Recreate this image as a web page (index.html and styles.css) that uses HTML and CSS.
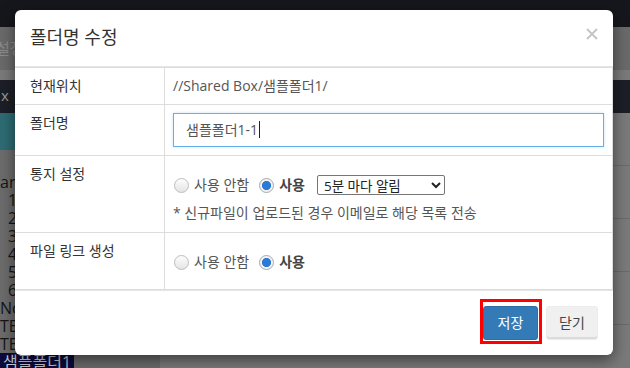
FILE: index.html
```html
<!DOCTYPE html>
<html lang="ko">
<head>
  <meta charset="UTF-8">
  <title>폴더명 수정</title>
  <link rel="stylesheet" href="styles.css">
</head>
<body>

  <div class="page">
    <div class="topbar"></div>
    <div class="toolbar"><span class="toolbar-title">설정</span></div>
    <div class="subbar"></div>
    <div class="navbar"><span class="nav-close">x</span></div>
    <div class="workspace">
      <div class="tree">
        <div class="tree-tab">수</div>
        <ul class="tree-list">
          <li>are</li>
          <li class="indent">1.</li>
          <li class="indent">2.</li>
          <li class="indent">3.</li>
          <li class="indent">4.</li>
          <li class="indent">5.</li>
          <li class="indent">6.</li>
          <li>No</li>
          <li>TE</li>
          <li>TE</li>
          <li><span class="selected">샘플폴더1</span></li>
        </ul>
      </div>
      <div class="grid">
        <div class="grid-row"></div>
        <div class="grid-row"></div>
        <div class="grid-row"></div>
        <div class="grid-row"></div>
      </div>
    </div>
  </div>

  <div class="modal">
    <div class="modal-header">
      <h4 class="modal-title">폴더명 수정</h4>
      <span class="close">
        <svg width="12" height="12" viewBox="0 0 12 12">
          <path d="M1 1 L11 11 M11 1 L1 11" stroke="#c4c4c4" stroke-width="1.8" fill="none"/>
        </svg>
      </span>
    </div>

    <div class="form">
      <div class="form-row">
        <div class="form-label">현재위치</div>
        <div class="form-value path">//Shared Box/샘플폴더1/</div>
      </div>
      <div class="form-row">
        <div class="form-label">폴더명</div>
        <div class="form-value">
          <div class="text-input">샘플폴더1-1<span class="caret"></span></div>
        </div>
      </div>
      <div class="form-row">
        <div class="form-label">통지 설정</div>
        <div class="form-value notify">
          <div class="radio-line">
            <label class="radio-label"><input type="radio" name="notify" class="radio"> 사용 안함</label>
            <label class="radio-label strong"><input type="radio" name="notify" class="radio" checked> 사용</label>
            <select class="interval">
              <option>5분 마다 알림</option>
              <option>10분 마다 알림</option>
              <option>30분 마다 알림</option>
            </select>
          </div>
          <p class="note">* 신규파일이 업로드된 경우 이메일로 해당 목록 전송</p>
        </div>
      </div>
      <div class="form-row">
        <div class="form-label">파일 링크 생성</div>
        <div class="form-value link">
          <div class="radio-line">
            <label class="radio-label"><input type="radio" name="link" class="radio"> 사용 안함</label>
            <label class="radio-label strong"><input type="radio" name="link" class="radio" checked> 사용</label>
          </div>
        </div>
      </div>
    </div>

    <div class="modal-footer">
      <span class="highlight"><button class="btn btn-primary">저장</button></span>
      <button class="btn btn-default">닫기</button>
    </div>
  </div>

</body>
</html>
```

FILE: styles.css
```css
* {
  box-sizing: border-box;
}

body {
  margin: 0;
  width: 630px;
  height: 368px;
  overflow: hidden;
  position: relative;
  font-family: 'Open Sans', 'Noto Sans CJK KR', sans-serif;
  background: #737373;
  color: #333;
}

/* background page (already dimmed by the modal backdrop) */
.topbar {
  height: 27px;
  background: #15171c;
}

.toolbar {
  height: 43px;
  background: #6a6a6a;
  color: #8c8c8c;
  font-size: 15px;
  line-height: 43px;
  text-indent: -4px;
}

.subbar {
  height: 10px;
  background: #7a7a7a;
}

.navbar {
  height: 33px;
  background: #1c1f27;
  color: #9a9a9a;
  font-size: 15px;
  line-height: 31px;
  padding-left: 1px;
}

.workspace {
  display: flex;
  height: 255px;
}

.tree {
  width: 160px;
  background: #6c6c6c;
}

.tree-tab {
  height: 37px;
  background: #2d6c74;
  color: #86aeb3;
  font-size: 14px;
  line-height: 37px;
  padding-left: 20px;
}

.tree-list {
  list-style: none;
  margin: 0;
  padding: 23px 0 0 0;
  font-size: 16px;
  line-height: 18px;
  color: #151515;
  white-space: nowrap;
}

.tree-list .indent {
  padding-left: 8px;
}

.tree-list .selected {
  display: inline-block;
  background: #0b0b3d;
  color: #c8c8d4;
  padding: 0 3px;
  line-height: 18px;
}

.grid {
  flex-grow: 1;
  background: #7a7a7a;
}

.grid-row {
  height: 53px;
  border-bottom: 1px solid #6b6b6b;
}

/* modal */
.modal {
  position: absolute;
  left: 15px;
  top: 10px;
  width: 598px;
  height: 345px;
  background: #fff;
  border-radius: 6px;
  box-shadow: 0 5px 15px rgba(0, 0, 0, 0.5);
  overflow: hidden;
}

.modal-header {
  display: flex;
  justify-content: space-between;
  padding: 14px 15px;
  border-bottom: 1px solid #e5e5e5;
  height: 57px;
}

.modal-title {
  margin: 0;
  font-size: 18px;
  font-weight: normal;
  line-height: 27px;
  color: #333;
}

.close {
  margin-top: 4px;
  height: 12px;
}

.close svg {
  display: block;
}

.form {
  border: 1px solid #ddd;
  border-left: none;
  font-size: 14px;
}

.form-row {
  display: grid;
  grid-template-columns: 150px 1fr;
  border-bottom: 1px solid #ddd;
}

.form-row:last-child {
  border-bottom: none;
}

.form-label {
  padding: 8px 15px;
  line-height: 20px;
  color: #333;
  border-right: 1px solid #ddd;
}

.form-value {
  padding: 8px;
  line-height: 20px;
  color: #555;
}

.text-input {
  height: 34px;
  border: 1px solid #66afe9;
  padding: 6px 12px;
  line-height: 20px;
  color: #555;
  box-shadow: 0 0 3px rgba(102, 175, 233, 0.35);
}

.caret {
  display: inline-block;
  width: 1px;
  height: 17px;
  background: #222;
  vertical-align: -3px;
  margin-left: 1px;
}

.notify {
  padding-bottom: 9px;
}

.link {
  padding-bottom: 16px;
}

.radio-line {
  display: flex;
  align-items: center;
  height: 22px;
  margin-top: 10px;
  color: #555;
}

.radio-label {
  display: flex;
  align-items: center;
  margin-right: 9px;
}

.radio-label.strong {
  font-weight: bold;
  color: #444;
  margin-right: 12px;
}

.radio {
  -webkit-appearance: none;
  appearance: none;
  width: 15px;
  height: 15px;
  margin: 0 5px 0 1px;
  border: 1px solid #bdbdbd;
  border-radius: 50%;
  background: linear-gradient(#fdfdfd, #e4e4e4);
}

.radio:checked {
  border-color: #a9a9a9;
  background: radial-gradient(circle, #2b7bd6 0, #2b7bd6 4.2px, #f2f2f2 5px);
}

.interval {
  width: 128px;
  height: 20px;
  font-family: 'Open Sans', 'Noto Sans CJK KR', sans-serif;
  font-size: 13.5px;
  color: #222;
  border: 1px solid #767676;
  border-radius: 2px;
  background: #fff;
  padding: 0 2px;
}

.note {
  margin: 7px 0 0 0;
  font-size: 14px;
  line-height: 20px;
  color: #555;
}

.modal-footer {
  display: flex;
  justify-content: flex-end;
  align-items: center;
  gap: 8px;
  padding: 15px;
  border-top: 1px solid #e5e5e5;
}

.btn {
  height: 34px;
  padding: 6px 12px;
  font-family: 'Open Sans', 'Noto Sans CJK KR', sans-serif;
  font-size: 14px;
  line-height: 20px;
  border: 1px solid transparent;
  border-radius: 3px;
  cursor: pointer;
}

.btn-primary {
  width: 55px;
  background: #337ab7;
  border-color: #2e6da4;
  color: #fff;
}

.btn-default {
  width: 52px;
  background: #f0f0f0;
  border-color: #ececec;
  color: #444;
  box-shadow: inset 0 -2px 0 #dcdcdc;
}

.highlight {
  position: relative;
  display: flex;
}

.highlight::after {
  content: "";
  position: absolute;
  top: -7px;
  left: -3px;
  right: -4px;
  bottom: -4px;
  border: 3px solid #f00;
}
```
